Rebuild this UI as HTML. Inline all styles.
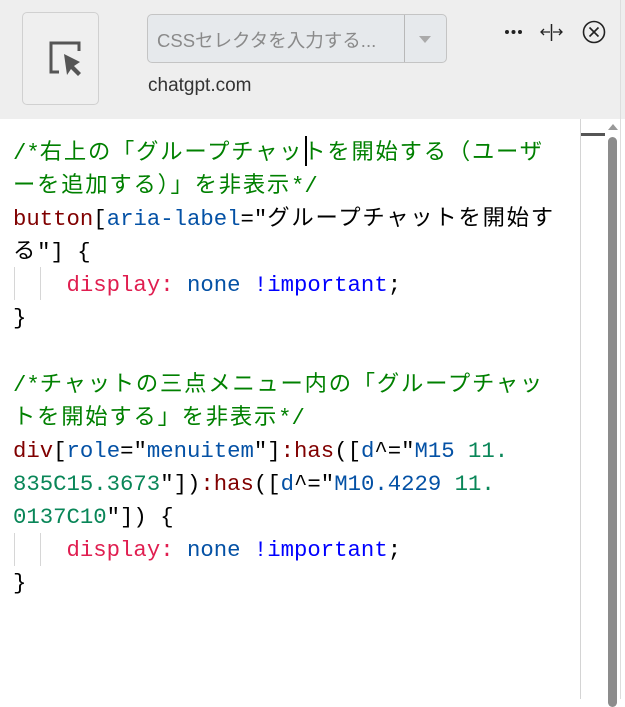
<!DOCTYPE html>
<html><head><meta charset="utf-8"><style>
body{margin:0;width:625px;height:699px;overflow:hidden;background:#fff;font-family:"Liberation Sans","Noto Sans CJK JP",sans-serif;position:relative}
.hdr{position:absolute;left:0;top:0;width:625px;height:119px;background:#eeeeee}
.pick{position:absolute;left:22px;top:12px;width:75px;height:91px;border:1px solid #d0d0d0;border-radius:5px;background:#efefef}
.inp{position:absolute;left:147px;top:14px;width:298px;height:47px;border:1px solid #c4c4c4;border-radius:5px;background:#e6e9ec}
.inp .ph{position:absolute;left:9px;top:12px;font-size:18.5px;color:#8a8a8a}
.inp .dv{position:absolute;left:256px;top:0;width:1px;height:47px;background:#b8b8b8}
.dom{position:absolute;left:148px;top:75px;font-size:19px;color:#333}
.code{position:absolute;left:13px;top:137px;font-family:"Liberation Mono","Noto Sans CJK JP",monospace;font-size:22.3px;line-height:33.1px;white-space:pre;color:#000}
.j{letter-spacing:1.8px}
.c{color:#008000}.s{color:#800000}.a{color:#0451a5}.p{color:#e01e50}.b{color:#0000ff}.n{color:#098658}
.guide{position:absolute;width:1px;background:#d6d6d6}
</style></head><body>
<div class="hdr">
<div class="pick"><svg width="75" height="91" viewBox="0 0 75 91"><path d="M36 59H28V30H56V38" fill="none" stroke="#555" stroke-width="3"/><path d="M41 41L44 62L48 56L55 63L58 60L51 53L57 49Z" fill="#555"/></svg></div>
<div class="inp"><div class="ph">CSSセレクタを入力する...</div><div class="dv"></div><svg style="position:absolute;left:271px;top:21px" width="12" height="7"><path d="M0 0H12L6 7Z" fill="#aaa"/></svg></div>
<div class="dom">chatgpt.com</div>
<svg style="position:absolute;left:500px;top:20px" width="120" height="26"><circle cx="7" cy="12" r="2" fill="#222"/><circle cx="13.5" cy="12" r="2" fill="#222"/><circle cx="20" cy="12" r="2" fill="#222"/>
<path d="M41 12H50M44 9L41 12L44 15M53 12H62M59 9L62 12L59 15" fill="none" stroke="#222" stroke-width="1.3"/><path d="M51.5 4V21" stroke="#222" stroke-width="1.5"/>
<circle cx="94" cy="12" r="10.5" fill="none" stroke="#222" stroke-width="1.6"/><path d="M89.5 7.5L98.5 16.5M98.5 7.5L89.5 16.5" stroke="#222" stroke-width="1.6"/></svg>
</div>
<div style="position:absolute;left:620px;top:0;width:1px;height:699px;background:#ddd"></div>
<div style="position:absolute;left:580px;top:119px;width:1px;height:580px;background:#d4d4d4"></div>
<div style="position:absolute;left:581px;top:133px;width:24px;height:3px;background:#555"></div>
<svg style="position:absolute;left:607px;top:123px" width="12" height="8"><path d="M1 7H11L6 1Z" fill="#999"/></svg>
<div style="position:absolute;left:608px;top:137px;width:9px;height:570px;border-radius:5px;background:#8c8c8c"></div>
<div class="guide" style="left:14px;top:267px;height:33px"></div><div class="guide" style="left:40px;top:267px;height:33px"></div>
<div class="guide" style="left:14px;top:533px;height:33px"></div><div class="guide" style="left:40px;top:533px;height:33px"></div>
<div style="position:absolute;left:305px;top:136px;width:2px;height:30px;background:#000"></div>
<div class="code"><span class="c">/*<span class="j">右上の「グループチャットを開始する（ユーザ</span></span>
<span class="c"><span class="j">ーを追加する）」を非表示</span>*/</span>
<span class="s">button</span>[<span class="a">aria-label</span>="<span class="j">グループチャットを開始す</span>
<span class="j">る</span>"] {
    <span class="p">display:</span> <span class="a">none</span> <span class="b">!important</span>;
}

<span class="c">/*<span class="j">チャットの三点メニュー内の「グループチャッ</span></span>
<span class="c"><span class="j">トを開始する」を非表示</span>*/</span>
<span class="s">div</span>[<span class="a">role</span>="<span class="a">menuitem</span>"]<span class="s">:has</span>([<span class="a">d</span>^="<span class="a">M15</span> <span class="n">11.</span>
<span class="n">835C15.3673</span>"])<span class="s">:has</span>([<span class="a">d</span>^="<span class="a">M10.4229</span> <span class="n">11.</span>
<span class="n">0137C10</span>"]) {
    <span class="p">display:</span> <span class="a">none</span> <span class="b">!important</span>;
}</div>
</body></html>
